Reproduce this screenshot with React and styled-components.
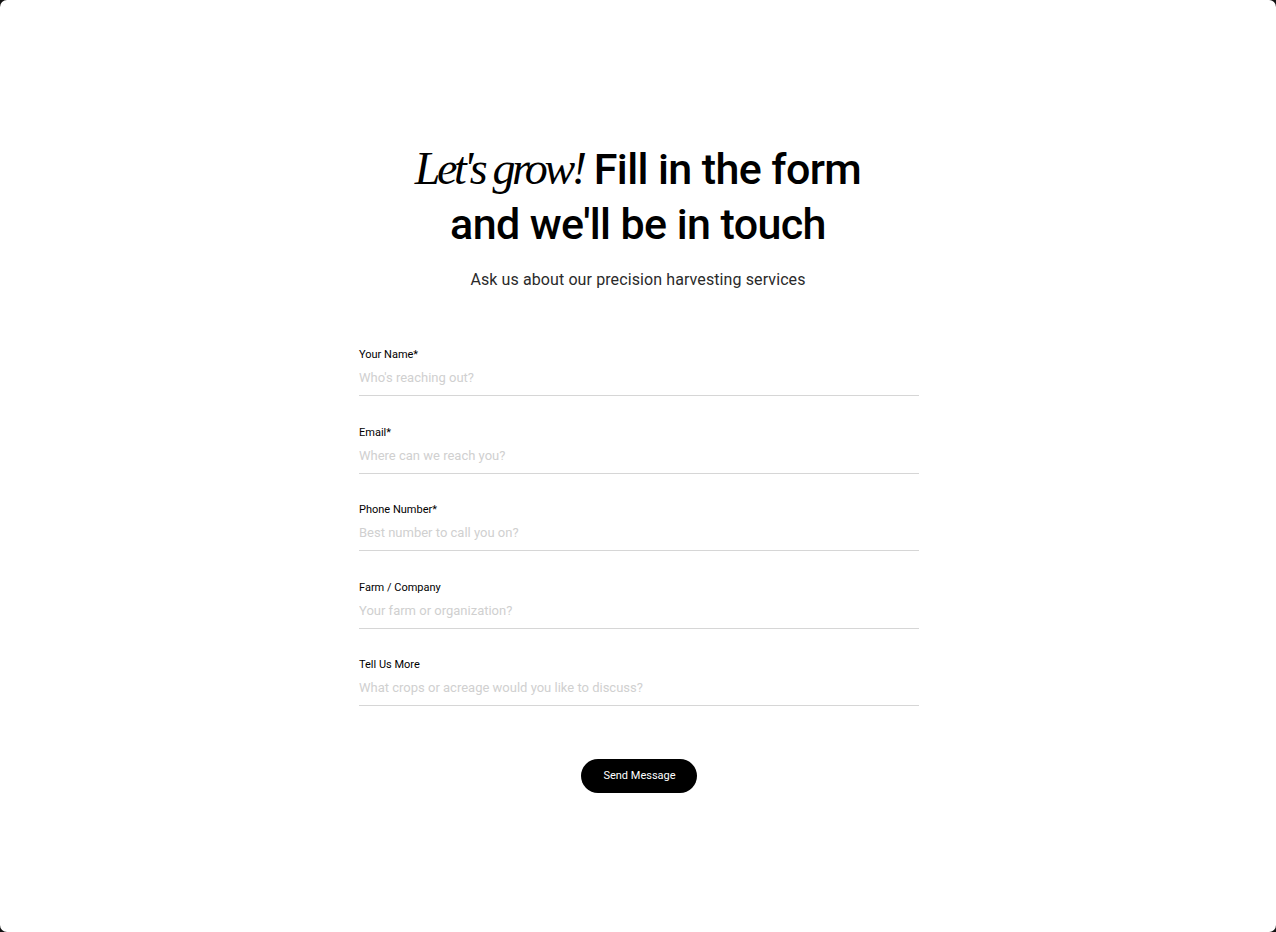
import React from 'react';
import styled, { createGlobalStyle } from 'styled-components';

const GlobalStyle = createGlobalStyle`
  html, body {
    margin: 0;
    padding: 0;
    background: #111;
  }

  * {
    box-sizing: border-box;
  }
`;

const Page = styled.main`
  height: 932px;
  background: #fff;
  border-radius: 7px;
  display: flex;
  flex-direction: column;
  align-items: center;
  padding-top: 141px;
  font-family: Roboto, 'Liberation Sans', sans-serif;
  color: #000;
`;

const Heading = styled.h1`
  margin: 0;
  font-size: 43px;
  font-weight: 500;
  line-height: 55px;
  letter-spacing: -0.6px;
  text-align: center;
`;

const Accent = styled.em`
  font-family: 'Liberation Serif', serif;
  font-style: italic;
  font-weight: 400;
  font-size: 46px;
  letter-spacing: -3.4px;
`;

const Subtitle = styled.p`
  margin: 18px 0 0;
  font-size: 16px;
  color: #2a2a2a;
  letter-spacing: 0.1px;
`;

const Form = styled.form`
  width: 560px;
  margin: 59px 0 0 2px;
  display: flex;
  flex-direction: column;
  gap: 29.5px;
`;

const Field = styled.label`
  display: flex;
  flex-direction: column;
  gap: 6px;
`;

const FieldLabel = styled.span`
  font-size: 11px;
  font-weight: 400;
  line-height: 14px;
`;

const Input = styled.input`
  border: 0;
  border-bottom: 1px solid #d6d6d6;
  padding: 0 0 8px;
  font-family: inherit;
  font-size: 13px;
  line-height: 19px;
  color: #000;
  background: transparent;
  outline: none;

  &::placeholder {
    color: #d0d0d0;
  }
`;

const Actions = styled.div`
  display: flex;
  justify-content: center;
  margin-top: 23px;
`;

const SendButton = styled.button`
  height: 34px;
  padding: 0 21px 0 22px;
  border: 0;
  border-radius: 17px;
  background: #000;
  color: #fff;
  font-family: inherit;
  font-size: 11px;
  font-weight: 400;
  cursor: pointer;
`;

const fields = [
  { label: 'Your Name*', placeholder: "Who's reaching out?" },
  { label: 'Email*', placeholder: 'Where can we reach you?' },
  { label: 'Phone Number*', placeholder: 'Best number to call you on?' },
  { label: 'Farm / Company', placeholder: 'Your farm or organization?' },
  { label: 'Tell Us More', placeholder: 'What crops or acreage would you like to discuss?' },
];

export default function App() {
  return (
    <>
      <GlobalStyle />
      <Page>
        <Heading>
          <Accent>Let's grow!</Accent> Fill in the form
          <br />
          and we'll be in touch
        </Heading>
        <Subtitle>Ask us about our precision harvesting services</Subtitle>
        <Form onSubmit={(e) => e.preventDefault()}>
          {fields.map((f) => (
            <Field key={f.label}>
              <FieldLabel>{f.label}</FieldLabel>
              <Input placeholder={f.placeholder} />
            </Field>
          ))}
          <Actions>
            <SendButton type="submit">Send Message</SendButton>
          </Actions>
        </Form>
      </Page>
    </>
  );
}
